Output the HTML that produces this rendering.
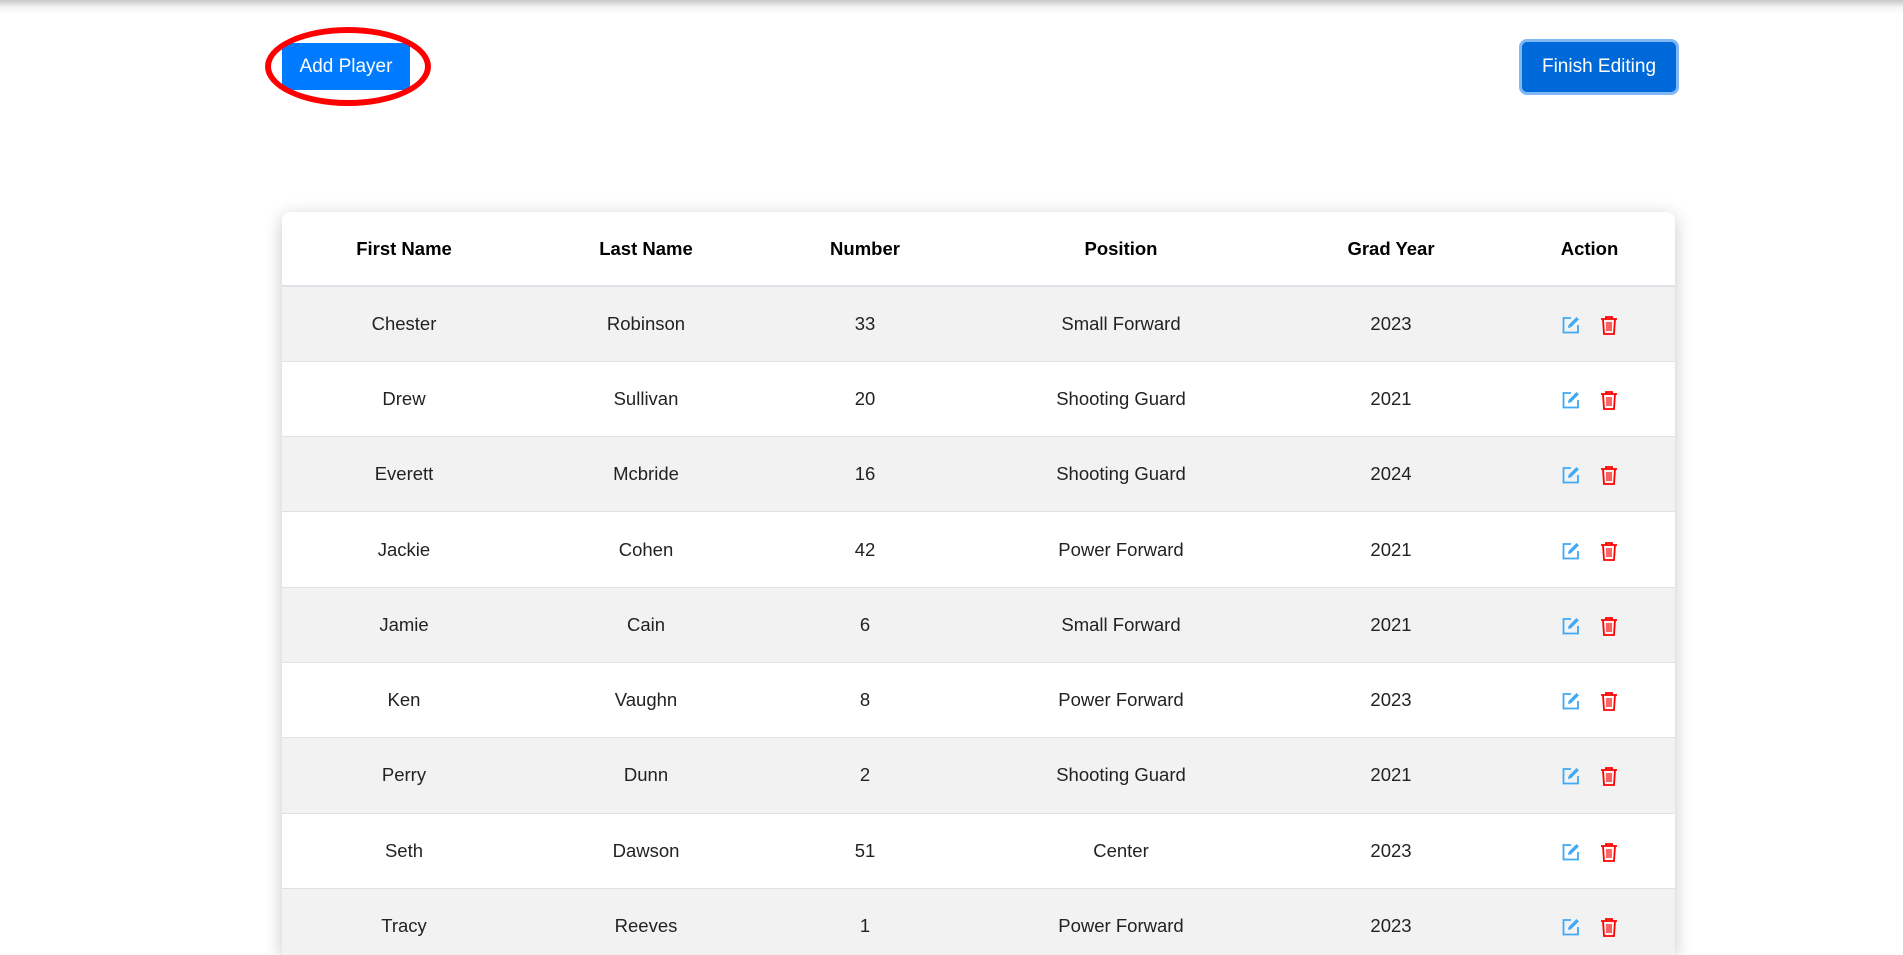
<!DOCTYPE html>
<html style="overflow:hidden;width:1903px;height:955px"><head><style>
*{box-sizing:border-box;margin:0;padding:0}
body{width:1903px;height:955px;overflow:hidden;background:#fff;font-family:"Liberation Sans",sans-serif;position:relative}
.topsh{position:absolute;left:0;top:0;width:1903px;height:14px;background:linear-gradient(#c8c8c8,#f4f4f4 50%,#fff)}
.btn{position:absolute;color:#fff;font-size:19px;display:flex;align-items:center;justify-content:center}
#add{left:282px;top:43px;width:128px;height:47px;background:#007bff}
#ell{position:absolute;left:265px;top:27px;width:166px;height:79px;border:6px solid #f00;border-radius:50%}
#fin{left:1522px;top:42px;width:154px;height:50px;background:#0069d9;border-radius:5px;box-shadow:0 0 0 3px #80b8f5}
.card{position:absolute;left:282px;top:212px;width:1393px;height:743px;background:#fff;border-radius:8px 8px 0 0;box-shadow:0 4px 18px rgba(0,0,0,.22);overflow:hidden}
table{border-collapse:collapse;width:1393px;table-layout:fixed}
th,td{text-align:center;font-size:18.5px;color:#222}
th{height:74px;font-weight:bold;color:#000;border-bottom:2px solid #dee2e6}
td{height:75.3px;border-bottom:1px solid #dee2e6}
tr:nth-child(odd) td{background:#f2f2f2}
.ic{display:inline-block;vertical-align:middle;margin:0 9px}
</style></head><body>
<div class="topsh"></div>
<div class="btn" id="add">Add Player</div>
<div id="ell"></div>
<div class="btn" id="fin">Finish Editing</div>
<div class="card"><table>
<colgroup><col style="width:244px"><col style="width:240px"><col style="width:198px"><col style="width:314px"><col style="width:226px"><col style="width:171px"></colgroup>
<thead><tr><th>First Name</th><th>Last Name</th><th>Number</th><th>Position</th><th>Grad Year</th><th>Action</th></tr></thead>
<tbody id="tb">
<tr><td>Chester</td><td>Robinson</td><td>33</td><td>Small Forward</td><td>2023</td><td>A</td></tr>
<tr><td>Drew</td><td>Sullivan</td><td>20</td><td>Shooting Guard</td><td>2021</td><td>A</td></tr>
<tr><td>Everett</td><td>Mcbride</td><td>16</td><td>Shooting Guard</td><td>2024</td><td>A</td></tr>
<tr><td>Jackie</td><td>Cohen</td><td>42</td><td>Power Forward</td><td>2021</td><td>A</td></tr>
<tr><td>Jamie</td><td>Cain</td><td>6</td><td>Small Forward</td><td>2021</td><td>A</td></tr>
<tr><td>Ken</td><td>Vaughn</td><td>8</td><td>Power Forward</td><td>2023</td><td>A</td></tr>
<tr><td>Perry</td><td>Dunn</td><td>2</td><td>Shooting Guard</td><td>2021</td><td>A</td></tr>
<tr><td>Seth</td><td>Dawson</td><td>51</td><td>Center</td><td>2023</td><td>A</td></tr>
<tr><td>Tracy</td><td>Reeves</td><td>1</td><td>Power Forward</td><td>2023</td><td>A</td></tr>
</tbody></table></div>
<script>
var e='<svg class="ic" width="20" height="20" viewBox="0 0 20 20"><path d="M10 3H2.5v14.5H17V10" fill="none" stroke="#3fa9f5" stroke-width="1.8"/><path d="M7 13l.6-3L15.5 2l2.4 2.4L10 12.3z" fill="#3fa9f5"/></svg>';
var t='<svg class="ic" width="20" height="20" viewBox="0 0 20 20"><path d="M2 4h16M7 4V2h6v2M4 4l1 15h10l1-15" fill="none" stroke="#f00" stroke-width="1.8"/><path d="M8 7v9M10 7v9M12 7v9" stroke="#f00" stroke-width="1.2"/></svg>';
document.querySelectorAll('#tb tr').forEach(function(r){r.lastElementChild.innerHTML=e+t});
</script>
</body></html>
